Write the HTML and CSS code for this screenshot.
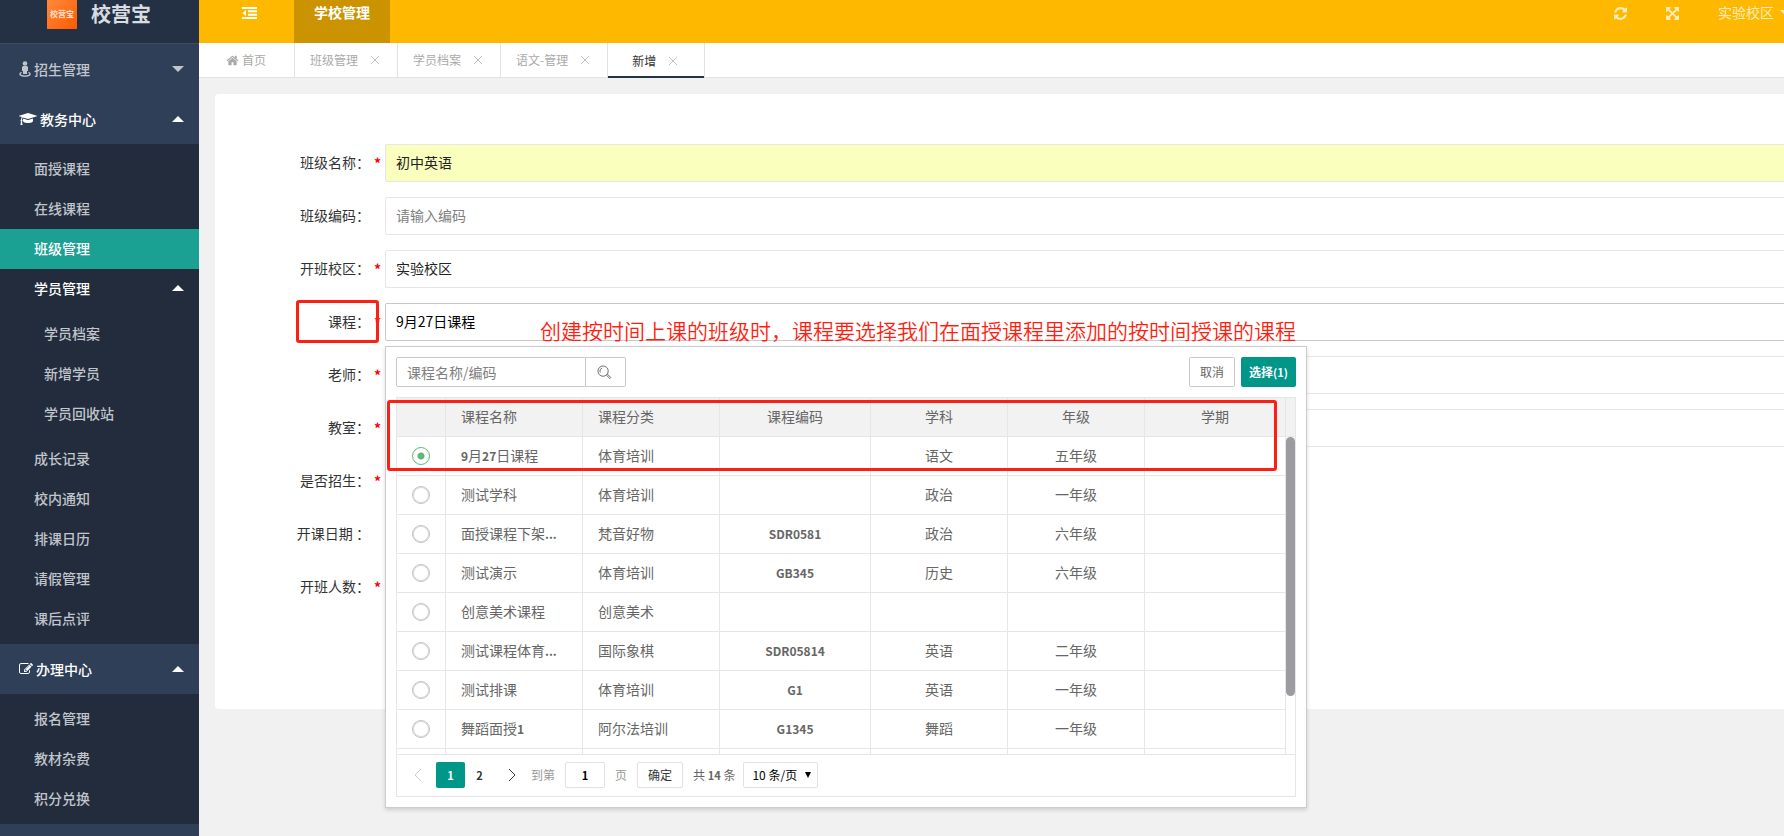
FILE: index.html
```html
<!DOCTYPE html>
<html lang="zh-CN">
<head>
<meta charset="utf-8">
<title>校营宝</title>
<link rel="stylesheet" href="styles.css">
</head>
<body>
<div class="app">
  <aside class="side">
    <div class="brand"><span class="brand-mark">校营宝</span><span class="brand-name">校营宝</span></div>
    <nav>
      <a class="group" href="#"><svg class="icon icon-street" viewBox="0 0 12 16"><circle cx="6" cy="2.5" r="2.3"/><path d="M4 5h4l1 1v4H8v3H4v-3H3V6z"/><path d="M2.6 11.3C.4 12 .4 14 2.6 14.6c2 .6 4.800 .6 6.800 0 2.200-.6 2.200-2.600 0-3.300" fill="none" stroke="currentColor" stroke-width="1.400"/></svg><span>招生管理</span><i class="caret down"></i></a>
      <a class="group open" href="#"><svg class="icon icon-cap" viewBox="0 0 2304 1792"><path d="M1774 836l18 316q4 69-82 128t-235 93.500-323 34.500-323-34.500-235-93.500-82-128l18-316 574 181q22 7 48 7t48-7zm530-324q0 23-22 31l-1120 352q-4 1-10 1t-10-1l-652-206q-43 34-71 111.500t-34 178.500q63 36 63 109 0 69-58 107l58 433q2 14-8 25-9 11-24 11h-192q-15 0-24-11-10-11-8-25l58-433q-58-38-58-107 0-73 65-111 11-207 98-330l-333-104q-22-8-22-31t22-31l1120-352q4-1 10-1t10 1l1120 352q22 8 22 31z"/></svg><span>教务中心</span><i class="caret up"></i></a>
      <div class="sub">
        <a href="#">面授课程</a>
        <a href="#">在线课程</a>
        <a class="active" href="#">班级管理</a>
        <a class="open" href="#"><span>学员管理</span><i class="caret up"></i></a>
        <div class="sub nested">
          <a href="#">学员档案</a>
          <a href="#">新增学员</a>
          <a href="#">学员回收站</a>
        </div>
        <a href="#">成长记录</a>
        <a href="#">校内通知</a>
        <a href="#">排课日历</a>
        <a href="#">请假管理</a>
        <a href="#">课后点评</a>
      </div>
      <a class="group open" href="#"><svg class="icon icon-edit" viewBox="0 0 1792 1792"><path d="M888 1184l116-116-152-152-116 116v56h96v96h56zm440-720q-16-16-33 1l-350 350q-17 17-1 33t33-1l350-350q17-17 1-33zm80 594v190q0 119-84.500 203.500t-203.500 84.500h-832q-119 0-203.500-84.500t-84.500-203.500v-832q0-119 84.500-203.500t203.500-84.500h832q63 0 117 25 15 7 18 23 3 17-9 29l-49 49q-14 14-32 8-23-6-45-6h-832q-66 0-113 47t-47 113v832q0 66 47 113t113 47h832q66 0 113-47t47-113v-126q0-13 9-22l64-64q15-15 35-7t20 29zm-96-738l288 288-672 672h-288v-288zm444 132l-92 92-288-288 92-92q28-28 68-28t68 28l152 152q28 28 28 68t-28 68z"/></svg><span>办理中心</span><i class="caret up"></i></a>
      <div class="sub">
        <a href="#">报名管理</a>
        <a href="#">教材杂费</a>
        <a href="#">积分兑换</a>
      </div>
    </nav>
  </aside>

  <main class="main">
    <header class="top">
      <button class="top-btn fold" type="button" aria-label="收起菜单"><svg viewBox="0 0 15 12"><path d="M0 0h15v2H0zM6 3.300h9v2H6zM6 6.700h9v2H6zM0 10h15v2H0zM4 3v6L.5 6z"/></svg></button>
      <a class="top-tab" href="#">学校管理</a>
      <span class="grow"></span>
      <button class="top-btn" type="button" aria-label="刷新"><svg viewBox="128 128 1536 1536"><path d="M1639 1056q0 5-1 7-64 268-268 434.500t-478 166.500q-146 0-282.500-55t-243.500-157l-129 129q-19 19-45 19t-45-19-19-45v-448q0-26 19-45t45-19h448q26 0 45 19t19 45-19 45l-137 137q71 66 161 102t187 36q134 0 250-65t186-179q11-17 53-117 8-23 30-23h192q13 0 22.500 9.500t9.500 22.500zm25-800v448q0 26-19 45t-45 19h-448q-26 0-45-19t-19-45 19-45l138-138q-148-137-349-137-134 0-250 65t-186 179q-11 17-53 117-8 23-30 23h-199q-13 0-22.500-9.500t-9.500-22.500v-7q65-268 270-434.500t480-166.500q146 0 284 55.500t245 156.500l130-129q19-19 45-19t45 19 19 45z"/></svg></button>
      <button class="top-btn" type="button" aria-label="全屏"><svg viewBox="128 128 1536 1536"><path d="M1411 541l-355 355 355 355 144-144q29-31 70-14 39 17 39 59v448q0 26-19 45t-45 19h-448q-42 0-59-40-17-39 14-69l144-144-355-355-355 355 144 144q31 30 14 69-17 40-59 40h-448q-26 0-45-19t-19-45v-448q0-42 40-59 39-17 69 14l144 144 355-355-355-355-144 144q-19 19-45 19-12 0-24-5-40-17-40-59v-448q0-26 19-45t45-19h448q42 0 59 40 17 39-14 69l-144 144 355 355 355-355-144-144q-31-30-14-69 17-40 59-40h448q26 0 45 19t19 45v448q0 42-39 59-13 5-25 5-26 0-45-19z"/></svg></button>
      <a class="campus" href="#">实验校区<i class="caret down"></i></a>
    </header>

    <div class="tabs">
      <a class="tab home" href="#"><svg viewBox="0 0 1792 1792"><path d="M1472 992v480q0 26-19 45t-45 19h-384v-384h-256v384h-384q-26 0-45-19t-19-45v-480q0-1 .5-3t.5-3l575-474 575 474q1 2 1 6zm223-69l-62 74q-8 9-21 11h-3q-13 0-21-7l-692-577-692 577q-12 8-24 7-13-2-21-11l-62-74q-8-10-7-23.500t11-21.500l719-599q32-26 76-26t76 26l244 204v-195q0-14 9-23t23-9h192q14 0 23 9t9 23v408l219 182q10 8 11 21.500t-7 23.500z"/></svg>首页</a>
      <a class="tab" href="#">班级管理<svg class="x" viewBox="0 0 8 8"><path d="M0 0l8 8M8 0L0 8"/></svg></a>
      <a class="tab" href="#">学员档案<svg class="x" viewBox="0 0 8 8"><path d="M0 0l8 8M8 0L0 8"/></svg></a>
      <a class="tab" href="#">语文-管理<svg class="x" viewBox="0 0 8 8"><path d="M0 0l8 8M8 0L0 8"/></svg></a>
      <a class="tab current" href="#">新增<svg class="x" viewBox="0 0 8 8"><path d="M0 0l8 8M8 0L0 8"/></svg></a>
    </div>

    <form class="card">
      <div class="row"><label for="f1">班级名称：</label><b class="req">*</b><input class="box filled" id="f1" value="初中英语"></div>
      <div class="row"><label for="f2">班级编码：</label><b class="req"></b><input class="box" id="f2" placeholder="请输入编码"></div>
      <div class="row"><label for="f3">开班校区：</label><b class="req">*</b><input class="box" id="f3" value="实验校区"></div>
      <div class="row picker">
        <label for="f4">课程：</label><b class="req">*</b><input class="box focus" id="f4" value="9月27日课程">
        <div class="mark mark-label"></div>
        <p class="note">创建按时间上课的班级时，课程要选择我们在面授课程里添加的按时间授课的课程</p>
        <section class="popup">
          <div class="tools">
            <input class="search" aria-label="课程名称/编码" placeholder="课程名称/编码">
            <button class="search-btn" type="button" aria-label="搜索"><svg viewBox="0 0 16 16"><circle cx="6.500" cy="6.500" r="5.500"/><path d="M3.500 8A3.500 3.500 0 0 1 5.500 3.200M10.300 11l1-1 3.500 3.300-1.200 1.200z"/></svg></button>
            <span class="grow"></span>
            <button class="cancel" type="button">取消</button>
            <button class="choose" type="button">选择<span class="num-s">(1)</span></button>
          </div>
          <div class="grid">
            <table>
              <colgroup><col class="c-radio"><col class="c-text"><col class="c-text"><col class="c-code"><col class="c-text"><col class="c-text"><col class="c-term"><col></colgroup>
              <thead><tr><th></th><th class="l">课程名称</th><th class="l">课程分类</th><th>课程编码</th><th>学科</th><th>年级</th><th>学期</th><th class="gutter"></th></tr></thead>
              <tbody>
                <tr><td class="pick"><input type="radio" name="c" aria-label="9月27日课程" checked></td><td class="l"><span class="num">9</span>月<span class="num">27</span>日课程</td><td class="l">体育培训</td><td></td><td>语文</td><td>五年级</td><td></td><td class="gutter" rowspan="9"><div class="thumb"></div></td></tr>
                <tr><td class="pick"><input type="radio" name="c" aria-label="测试学科"></td><td class="l">测试学科</td><td class="l">体育培训</td><td></td><td>政治</td><td>一年级</td><td></td></tr>
                <tr><td class="pick"><input type="radio" name="c" aria-label="面授课程下架"></td><td class="l">面授课程下架<span class="num">...</span></td><td class="l">梵音好物</td><td><span class="num">SDR0581</span></td><td>政治</td><td>六年级</td><td></td></tr>
                <tr><td class="pick"><input type="radio" name="c" aria-label="测试演示"></td><td class="l">测试演示</td><td class="l">体育培训</td><td><span class="num">GB345</span></td><td>历史</td><td>六年级</td><td></td></tr>
                <tr><td class="pick"><input type="radio" name="c" aria-label="创意美术课程"></td><td class="l">创意美术课程</td><td class="l">创意美术</td><td></td><td></td><td></td><td></td></tr>
                <tr><td class="pick"><input type="radio" name="c" aria-label="测试课程体育"></td><td class="l">测试课程体育<span class="num">...</span></td><td class="l">国际象棋</td><td><span class="num">SDR05814</span></td><td>英语</td><td>二年级</td><td></td></tr>
                <tr><td class="pick"><input type="radio" name="c" aria-label="测试排课"></td><td class="l">测试排课</td><td class="l">体育培训</td><td><span class="num">G1</span></td><td>英语</td><td>一年级</td><td></td></tr>
                <tr><td class="pick"><input type="radio" name="c" aria-label="舞蹈面授1"></td><td class="l">舞蹈面授<span class="num">1</span></td><td class="l">阿尔法培训</td><td><span class="num">G1345</span></td><td>舞蹈</td><td>一年级</td><td></td></tr>
                <tr><td></td><td></td><td></td><td></td><td></td><td></td><td></td></tr>
              </tbody>
            </table>
          </div>
          <div class="pager">
            <button class="arrow off" type="button" aria-label="上一页"><svg viewBox="0 0 8 12"><path d="M7 0L1 6l6 6"/></svg></button>
            <button class="page on num-s" type="button">1</button>
            <button class="page num-s" type="button">2</button>
            <button class="arrow" type="button" aria-label="下一页"><svg viewBox="0 0 8 12"><path d="M1 0l6 6-6 6"/></svg></button>
            <label class="muted" for="goto">到第</label><input class="goto num-s" id="goto" value="1"><span class="muted">页</span>
            <button class="ok" type="button">确定</button>
            <span class="total">共 <span class="num-s">14</span> 条</span>
            <span class="size"><select aria-label="每页条数"><option>10 条/页</option></select></span>
          </div>
          <div class="mark mark-rows"></div>
        </section>
      </div>
      <div class="row"><label for="f5">老师：</label><b class="req">*</b><input class="box" id="f5"></div>
      <div class="row"><label for="f6">教室：</label><b class="req">*</b><input class="box" id="f6"></div>
      <div class="row"><label for="f7">是否招生：</label><b class="req">*</b><input class="box short" id="f7"></div>
      <div class="row"><label for="f8">开课日期 ：</label><b class="req"></b><input class="box short" id="f8"></div>
      <div class="row"><label for="f9">开班人数：</label><b class="req">*</b><input class="box short" id="f9"></div>
    </form>
  </main>
</div>
</body>
</html>
```
FILE: styles.css
```css
* { box-sizing: border-box; }
html, body { height: 100%; }
body {
  margin: 0;
  overflow: hidden;
  background: #f1f1f1;
  color: #333;
  font: 14px/20px "Noto Sans CJK SC", sans-serif;
}
a { color: inherit; text-decoration: none; }
button, input, select { font: inherit; color: inherit; margin: 0; padding: 0; }
button { background: none; border: 0; cursor: pointer; }
svg { fill: currentColor; display: block; }
.grow { flex: 1; }
.num { font-size: 12px; font-weight: bold; }
.num-s { font-size: 11px; font-weight: bold; }
.app { display: flex; min-height: 100%; }

/* sidebar */
.side { width: 199px; flex: none; background: #2f3f57; color: #c1c5cc; }
.brand {
  display: flex; gap: 14px; height: 44px; padding-left: 47px;
  background: #243145; border-bottom: 1px solid #434c5c; overflow: hidden;
}
.brand-mark {
  width: 30px; height: 29px; background: linear-gradient(135deg, #ff8a3c, #ff5a00);
  color: #ffe3d0; font-size: 8px; line-height: 28px; font-weight: bold; text-align: center;
}
.brand-name { font-size: 20px; line-height: 27px; font-weight: bold; color: #d9dce0; }
.group { display: flex; align-items: center; height: 50px; padding: 0 15px 1px 19px; gap: 3px; font-weight: 500; }
.open { color: #fff; }
.group span, .sub .open span { flex: 1; }
.icon-street { width: 12px; height: 16px; }
.icon-cap { width: 18px; height: 14px; }
.icon-edit { width: 14px; height: 14px; }
.caret { width: 0; height: 0; border: 6px solid transparent; }
.caret.down { border-top-color: currentColor; border-bottom: 0; }
.caret.up { border-bottom-color: currentColor; border-top: 0; }
.sub { padding: 5px 0; background: #222c3c; font-weight: 500; }
.sub a { display: flex; align-items: center; height: 40px; padding: 0 15px 2px 34px; }
.sub.nested a { padding-left: 44px; }
.sub .active { background: #1ba194; color: #fff; }

/* top bar */
.main { flex: 1; min-width: 0; margin-right: -24px; }
.top { display: flex; height: 43px; background: #ffb800; color: #fff; line-height: 25px; }
.top-btn { width: 52px; height: 26px; display: flex; align-items: center; justify-content: center; color: #ffedc0; }
.top-btn svg { width: 13px; height: 13px; }
.fold { width: 95px; color: #fff; padding-left: 6px; }
.fold.top-btn svg { width: 15px; height: 12px; }
.top-tab { width: 96px; background: #cc9300; font-weight: bold; text-align: center; }
.campus { display: flex; align-items: center; gap: 6px; height: 25px; padding: 0 16px 0 20px; color: #ffedc0; }

/* page tabs */
.tabs { display: flex; height: 35px; background: #fff; border-bottom: 1px solid #e2e2e2; font-size: 12px; color: #aaa; }
.tab { display: flex; align-items: center; gap: 13px; height: 34px; padding: 0 18px 0 15px; border-right: 1px solid #e2e2e2; }
.tab.home { width: 96px; gap: 3px; padding: 0 0 0 27px; }
.home svg { width: 13px; height: 13px; }
.x { width: 8px; height: 8px; fill: none; stroke: #c2c2c2; overflow: visible; }
.tab.current { height: 35px; padding: 0 27px 0 24px; color: #333; box-shadow: inset 0 -2px #243447; }

/* form */
.card { margin: 16px 0 0 16px; padding: 50px 0 103px; background: #fff; border-radius: 4px; }
.row { display: flex; position: relative; height: 38px; margin-bottom: 15px; }
.row:last-child { margin-bottom: 0; }
.row > label { width: 155px; line-height: 36px; text-align: right; }
.req { width: 15px; padding-left: 4px; line-height: 38px; color: #f00; }
.box { flex: 1; min-width: 0; border: 1px solid #e6e6e6; border-radius: 2px; padding: 0 10px 2px; background: #fff; color: #222; outline: 0; }
.box::placeholder, .search::placeholder { color: #808080; opacity: 1; }
.box.filled { background: #faffbd; }
.box.focus { border-color: #c9c9c9; color: #000; }
.box.short { flex: none; width: 300px; }
.picker { z-index: 2; }

/* annotations */
.mark { position: absolute; border: 3px solid #ff1f12; border-radius: 3px; pointer-events: none; }
.mark-label { left: 81px; top: -3px; width: 83px; height: 43px; }
.mark-rows { left: 1px; top: 53px; width: 890px; height: 71px; }
.note { position: absolute; z-index: 1; left: 325px; top: 12px; margin: 0; font-size: 21px; line-height: 30px; font-weight: 350; color: #ff1f12; white-space: nowrap; }

/* course picker */
.popup {
  position: absolute; left: 170px; top: 43px; width: 922px; padding: 10px;
  background: #fff; border: 1px solid #ccc; box-shadow: 0 2px 4px rgba(0,0,0,.15); color: #666;
}
.tools { display: flex; height: 30px; margin-bottom: 10px; }
.search { width: 190px; border: 1px solid #c9c9c9; border-radius: 2px 0 0 2px; padding: 0 10px; outline: 0; }
.search-btn { width: 40px; border: 1px solid #c9c9c9; border-left: 0; border-radius: 0 2px 2px 0; display: flex; align-items: center; justify-content: center; padding-right: 2px; }
.search-btn svg { width: 15px; height: 15px; fill: none; stroke: #666; }
.cancel { width: 46px; border: 1px solid #c9c9c9; border-radius: 2px; font-size: 12px; }
.choose { width: 55px; margin-left: 6px; background: #009688; border-radius: 2px; color: #fff; font-size: 12px; font-weight: bold; }
.grid { height: 358px; border: 1px solid #e6e6e6; overflow: hidden; }
table { width: 100%; table-layout: fixed; border-collapse: separate; border-spacing: 0; }
.c-radio { width: 49px; }
.c-text { width: 137px; }
.c-code { width: 151px; }
.c-term { width: 141px; }
th, td { height: 39px; padding: 0 0 2px; border: solid #e6e6e6; border-width: 0 1px 1px 0; font-weight: 400; text-align: center; white-space: nowrap; }
th { background: #f2f2f2; }
.l { text-align: left; padding-left: 15px; }
.pick { padding: 0; }
.gutter { padding: 0; border-right: 0; vertical-align: top; }
.thumb { height: 259px; border-radius: 5px; background: #9b9ba0; }
input[type="radio"] { appearance: none; display: block; margin: 0 auto; width: 18px; height: 18px; border: 1px solid #c2c2c2; border-radius: 50%; box-shadow: inset 0 0 0 1px #dcdcdc; }
input[type="radio"]:checked { border-color: #5fb878; box-shadow: none; background: radial-gradient(circle, #5fb878 3px, #fff 4px); }

/* pagination */
.pager { display: flex; align-items: center; height: 42px; border: 1px solid #e6e6e6; border-top: 0; padding: 0 0 1px 9px; font-size: 12px; }
.arrow { width: 30px; height: 26px; padding-left: 8px; color: #333; }
.arrow svg { width: 8px; height: 12px; fill: none; stroke: currentColor; }
.arrow.off { color: #ccc; }
.page { width: 29px; height: 26px; border-radius: 2px; color: #333; }
.page.on { background: #009688; color: #fff; }
.page + .arrow { width: 37px; padding-left: 14px; }
.muted { color: #999; }
.goto { width: 40px; height: 26px; margin: 0 10px; border: 1px solid #e2e2e2; border-radius: 2px; text-align: center; color: #000; }
.ok { width: 46px; height: 26px; margin: 0 10px; border: 1px solid #e2e2e2; border-radius: 2px; color: #333; }
.size { display: flex; position: relative; margin-left: 8px; }
.size::after { content: ""; position: absolute; right: 7px; top: 10px; border: 3px solid transparent; border-top: 6px solid #000; border-bottom: 0; }
.size select { appearance: none; width: 75px; height: 26px; padding: 0 8px; border: 1px solid #e2e2e2; border-radius: 2px; background: #fff; color: #000; }
```
